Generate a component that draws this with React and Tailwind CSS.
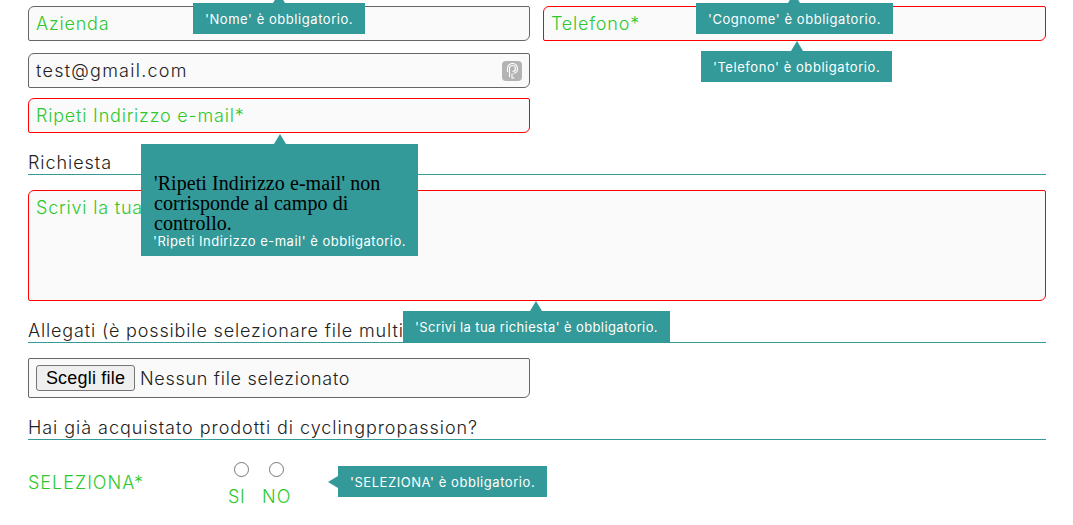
import { useState } from "react"

const fieldBase = "block w-full h-[35px] px-[7px] bg-[#fafafa] border rounded-tl-[6px] rounded-br-[6px] rounded-tr-[2px] rounded-bl-[2px] outline-none font-light text-[18px] tracking-[0.8px] text-[#222] placeholder:text-[#2ec82e]"
const tipBase = "absolute z-10 h-[31px] bg-[#339999] text-white text-[13px] tracking-[0.55px] leading-[32px] px-3 whitespace-nowrap"

const Tip = ({ className, children }) => (
    <div className={`${tipBase} ${className}`}>
        <span className="absolute -top-[10px] left-1/2 -ml-[6px] w-0 h-0 border-x-[6px] border-x-transparent border-b-[10px] border-b-[#339999]" />
        {children}
    </div>
)

const SectionTitle = ({ className, children }) => (
    <div className={`mt-[20px] pb-[1px] border-b border-[#339999] font-light text-[18px] leading-[20px] text-[#222] ${className}`}>
        {children}
    </div>
)

const App = () => {
    const [ email, setEmail ] = useState("test@gmail.com")

    return (
        <div className="w-[1073px] h-[525px] overflow-hidden bg-white font-['Inter',sans-serif]">
        <div className="relative ml-[28px] w-[1018px] pt-[6px]">
            <div className="grid grid-cols-[502px_503px] gap-x-[13px]">
                <div>
                    {/* azienda */}
                    <div className="relative">
                        <input className={`${fieldBase} border-[#666]`} placeholder="Azienda" />
                        <Tip className="left-[165px] -top-[3px]">'Nome' è obbligatorio.</Tip>
                    </div>

                    {/* email */}
                    <div className="relative mt-[12px]">
                        <input
                            className={`${fieldBase} !tracking-[1.25px] border-[#666]`}
                            value={email}
                            onChange={(e) => setEmail(e.target.value)}
                        />
                        <span className="absolute right-[8px] top-[8px] flex items-center justify-center w-[20px] h-[20px] rounded-[4px] bg-[#b3b3b3]">
                            <svg width="14" height="16" viewBox="0 0 14 16" fill="none" stroke="#fff" strokeWidth="1.1">
                                <path d="M4.5 14V5.5a3 3 0 0 1 6 0c0 2-1.4 3-3 3" />
                                <path d="M2.5 9V5.5a5 5 0 0 1 10 0c0 3-2 4.6-4 5" />
                                <path d="M7 10.5V15h2.5" />
                            </svg>
                        </span>
                    </div>

                    {/* ripeti email */}
                    <div className="relative mt-[10px]">
                        <input className={`${fieldBase} border-[#ff0000]`} placeholder="Ripeti Indirizzo e-mail*" />
                        <div className="absolute z-10 left-[113px] top-[46px] w-[277px] h-[112px] bg-[#339999] pl-[13px] pr-3 pt-[29px]">
                            <span className="absolute -top-[10px] left-1/2 -ml-[6px] w-0 h-0 border-x-[6px] border-x-transparent border-b-[10px] border-b-[#339999]" />
                            <p className="font-['Liberation_Serif',serif] text-[20px] tracking-[0.07px] leading-[20px] text-black">
                                'Ripeti Indirizzo e-mail' non corrisponde al campo di controllo.
                            </p>
                            <p className="-ml-px text-[13px] tracking-[0.5px] leading-[17px] text-white whitespace-nowrap">'Ripeti Indirizzo e-mail' è obbligatorio.</p>
                        </div>
                    </div>
                </div>

                {/* telefono */}
                <div className="relative h-[35px]">
                    <input className={`${fieldBase} border-[#ff0000]`} placeholder="Telefono*" />
                    <Tip className="left-[153px] -top-[3px]">'Cognome' è obbligatorio.</Tip>
                    <Tip className="left-[158px] top-[45px]">'Telefono' è obbligatorio.</Tip>
                </div>
            </div>

            {/* richiesta */}
            <SectionTitle className="tracking-[0.95px]">Richiesta</SectionTitle>
            <div className="relative mt-[15px]">
                <textarea
                    className={`${fieldBase} !h-[111px] py-[3px] border-[#ff0000] resize-none`}
                    placeholder="Scrivi la tua richiesta*"
                />
                <Tip className="left-[375px] top-[121px] !tracking-[0.38px]">'Scrivi la tua richiesta' è obbligatorio.</Tip>
            </div>

            {/* allegati */}
            <SectionTitle className="tracking-[0.85px]">Allegati (è possibile selezionare file multipli)</SectionTitle>
            <div className="mt-[15px] flex items-center gap-[5px] w-[502px] h-[40px] px-[7px] bg-[#fafafa] border border-[#666] rounded-tl-[2px] rounded-br-[6px] rounded-tr-[2px] rounded-bl-[2px]">
                <button className="h-[26px] w-[99px] bg-[#efefef] border border-[#767676] rounded-[3px] font-['Liberation_Sans',sans-serif] text-[18px] tracking-[0.2px] leading-none text-black">
                    Scegli file
                </button>
                <span className="font-light text-[18px] tracking-[0.7px] text-[#222]">Nessun file selezionato</span>
            </div>

            {/* acquisto */}
            <SectionTitle className="tracking-[0.95px]">Hai già acquistato prodotti di cyclingpropassion?</SectionTitle>
            <div className="flex mt-[22px]">
                <div className="w-[200px] pt-[10px] font-light text-[18px] leading-[22px] tracking-[1px] text-[#2ec82e]">SELEZIONA*</div>
                <label className="flex flex-col items-start w-[28px] font-light text-[18px] leading-[22px] tracking-[0.7px] text-[#2ec82e]">
                    <input type="radio" name="acquisto" className="ml-[6px] w-[15px] h-[15px] mb-[9px]" />
                    SI
                </label>
                <label className="flex flex-col items-start w-[30px] ml-[6px] font-light text-[18px] leading-[22px] tracking-[1.2px] text-[#2ec82e]">
                    <input type="radio" name="acquisto" className="ml-[7px] w-[15px] h-[15px] mb-[9px]" />
                    NO
                </label>
                <div className="relative ml-[46px] mt-[4px] h-[31px] bg-[#339999] text-white text-[13px] tracking-[0.55px] leading-[32px] px-3 whitespace-nowrap">
                    <span className="absolute -left-[10px] top-1/2 -mt-[6px] w-0 h-0 border-y-[6px] border-y-transparent border-r-[10px] border-r-[#339999]" />
                    'SELEZIONA' è obbligatorio.
                </div>
            </div>
        </div>
        </div>
    );
};

export default App;
